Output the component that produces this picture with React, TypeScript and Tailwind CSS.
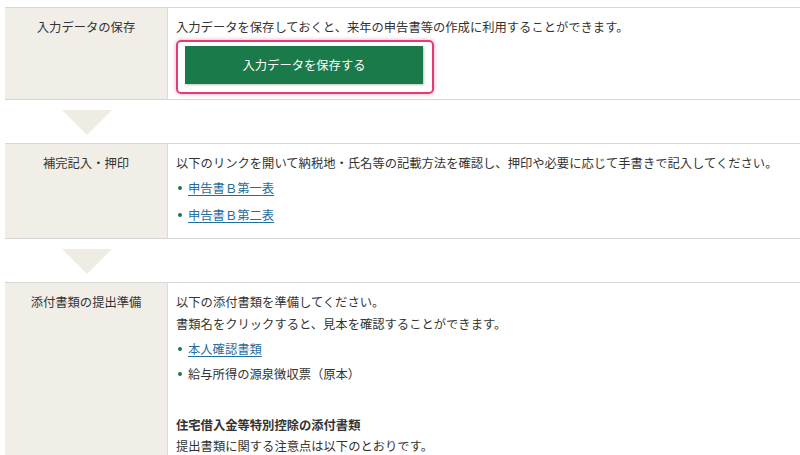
import React from 'react';

const font = { fontFamily: '"Noto Sans CJK JP", "Noto Sans", sans-serif' };

const Row: React.FC<{ label: string; children: React.ReactNode }> = ({ label, children }) => (
  <div className="flex border-t border-b border-[#d6d6d6] w-[830px]">
    <div className="w-[163px] shrink-0 bg-[#f1eee7] border-r border-[#dcdcdc] pt-[8px] text-center leading-[22px]">
      {label}
    </div>
    <div className="flex-1 pl-[8px] pt-[8px]">{children}</div>
  </div>
);

const Arrow = () => (
  <div className="h-[43px] flex pt-[10px]">
    <div className="w-[163px] flex justify-center">
      <div className="w-0 h-0 border-l-[25px] border-r-[25px] border-t-[25px] border-l-transparent border-r-transparent border-t-[#efece4]" />
    </div>
  </div>
);

const Item: React.FC<{ href?: boolean; children: React.ReactNode; className?: string }> = ({ href, children, className }) => (
  <li className={`flex items-center leading-[22px] ${className ?? ''}`}>
    <span className="w-[4px] h-[4px] rounded-full bg-[#1c7a48] ml-[2px] mr-[6px]" />
    {href ? <a className="text-[#1f6e9c] underline underline-offset-2">{children}</a> : <span>{children}</span>}
  </li>
);

export default function App() {
  return (
    <div className="bg-white w-[800px] h-[455px] overflow-hidden pl-[5px] pt-[7px] text-[12.3px] text-[#333]" style={font}>
      <Row label="入力データの保存">
        <p className="leading-[22px]">入力データを保存しておくと、来年の申告書等の作成に利用することができます。</p>
        <div className="mt-[2px] mb-[5px] w-[258px] h-[54px] border-2 border-[#e53a72] rounded-[5px] pt-[4px] pl-[7px] shadow-[0_0_4px_rgba(229,58,114,0.45)]">
          <button className="w-[238px] h-[38px] bg-[#1b7a4a] text-white text-[12.3px] shadow-[1px_1px_2px_rgba(0,0,0,0.25)]">
            入力データを保存する
          </button>
        </div>
      </Row>
      <Arrow />
      <Row label="補完記入・押印">
        <p className="leading-[22px]">以下のリンクを開いて納税地・氏名等の記載方法を確認し、押印や必要に応じて手書きで記入してください。</p>
        <ul className="pb-[12px]">
          <Item href className="mt-[3px]">申告書Ｂ第一表</Item>
          <Item href className="mt-[5px]">申告書Ｂ第二表</Item>
        </ul>
      </Row>
      <Arrow />
      <Row label="添付書類の提出準備">
        <p className="leading-[22px]">以下の添付書類を準備してください。</p>
        <p className="leading-[22px]">書類名をクリックすると、見本を確認することができます。</p>
        <ul>
          <Item href className="mt-[3px]">本人確認書類</Item>
          <Item className="mt-[3px]">給与所得の源泉徴収票（原本）</Item>
        </ul>
        <p className="leading-[22px] mt-[29px] font-bold">住宅借入金等特別控除の添付書類</p>
        <p className="leading-[20px]">提出書類に関する注意点は以下のとおりです。</p>
      </Row>
    </div>
  );
}
